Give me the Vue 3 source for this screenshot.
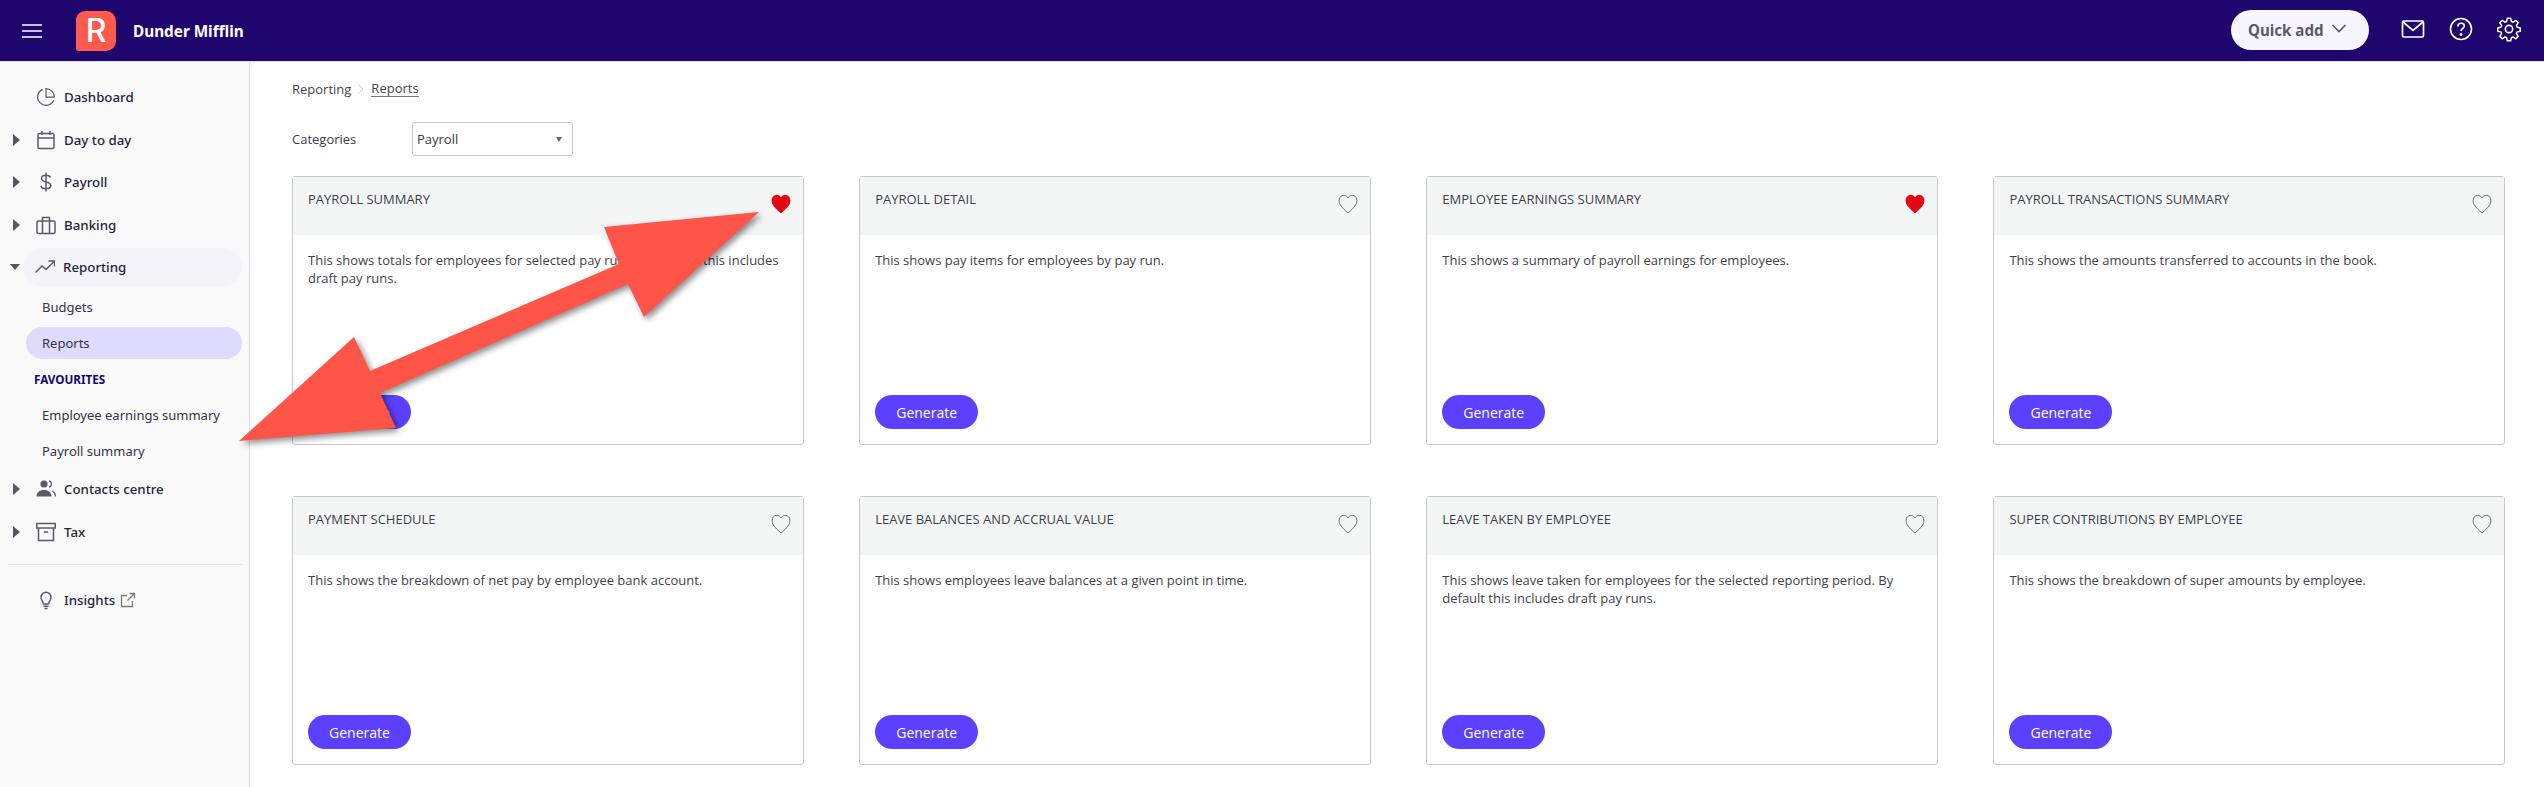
<script setup>
const reports = [
  { title: 'PAYROLL SUMMARY', text: 'This shows totals for employees for selected pay runs. By default this includes draft pay runs.', fav: true },
  { title: 'PAYROLL DETAIL', text: 'This shows pay items for employees by pay run.' },
  { title: 'EMPLOYEE EARNINGS SUMMARY', text: 'This shows a summary of payroll earnings for employees.', fav: true },
  { title: 'PAYROLL TRANSACTIONS SUMMARY', text: 'This shows the amounts transferred to accounts in the book.' },
  { title: 'PAYMENT SCHEDULE', text: 'This shows the breakdown of net pay by employee bank account.' },
  { title: 'LEAVE BALANCES AND ACCRUAL VALUE', text: 'This shows employees leave balances at a given point in time.' },
  { title: 'LEAVE TAKEN BY EMPLOYEE', text: 'This shows leave taken for employees for the selected reporting period. By default this includes draft pay runs.' },
  { title: 'SUPER CONTRIBUTIONS BY EMPLOYEE', text: 'This shows the breakdown of super amounts by employee.' },
]
const heart = 'M10 19C7.6 16.600 1 11.900 1 6.500 1 3.400 3.300 1.300 5.800 1.300c1.800 0 3.300 1 4.200 2.700 .9-1.700 2.400-2.700 4.200-2.700 2.500 0 4.800 2.100 4.800 5.200 0 5.400-6.600 10.100-9 12.500z'
</script>

<template>
  <div class="app">
    <header class="topbar">
      <svg class="burger" width="20" height="14" viewBox="0 0 20 14"><path d="M0 1h20M0 7h20M0 13h20" stroke="#fff" stroke-width="1.600"/></svg>
      <div class="logo">R</div>
      <div class="brand">Dunder Mifflin</div>
      <div class="top-right">
        <button class="quick">Quick add
          <svg class="chev" width="16" height="9" viewBox="0 0 16 9"><path d="M1.500 1l6.500 6.500L14.500 1" fill="none" stroke="#5a5a68" stroke-width="1.700"/></svg>
        </button>
        <svg class="ti mail" width="24" height="20" viewBox="0 0 24 20" fill="none" stroke="#fff" stroke-width="1.700"><rect x="1.500" y="2" width="21" height="16" rx="1.500"/><path d="M2 3l10 8.500L22 3"/></svg>
        <svg class="ti" width="24" height="24" viewBox="0 0 24 24" fill="none" stroke="#fff" stroke-width="1.600"><circle cx="12" cy="12" r="10.500"/><path d="M8.800 9.400c0-1.900 1.400-3.200 3.300-3.200s3.200 1.200 3.200 2.800c0 2.500-3.300 2.500-3.300 5"/><circle cx="12" cy="17.500" r=".6" fill="#fff"/></svg>
        <svg class="ti gear" width="26" height="26" viewBox="0 0 24 24" fill="none" stroke="#fff" stroke-width="1.500" stroke-linejoin="round"><path d="M10.300 1.500h3.400l.6 3.200 1.800.8 2.700-1.800 2.400 2.400-1.800 2.700.8 1.800 3.100.6v3.400l-3.100.6-.8 1.800 1.800 2.700-2.400 2.400-2.700-1.800-1.800.8-.6 3.100h-3.400l-.6-3.100-1.800-.8-2.700 1.800-2.400-2.400 1.800-2.700-.8-1.800-3.100-.6v-3.400l3.100-.6.800-1.800-1.800-2.700 2.400-2.400 2.700 1.800 1.800-.8z" transform="translate(12 12) scale(.92) translate(-12 -12.300)"/><circle cx="12" cy="12" r="3.400"/></svg>
      </div>
    </header>

    <div class="body">
      <aside class="sidebar">
        <div class="nav-row"><span class="caret none"></span>
          <svg class="ic" viewBox="0 0 24 24"><path d="M21.210 15.890A10 10 0 1 1 8 2.830"/><path d="M22 12A10 10 0 0 0 12 2v10z"/></svg>
          <span>Dashboard</span></div>
        <div class="nav-row"><span class="caret"></span>
          <svg class="ic" viewBox="0 0 20 20"><rect x="2" y="3.500" width="16" height="15" rx="1.500"/><path d="M2 8h16M6 1v4M14 1v4"/></svg>
          <span>Day to day</span></div>
        <div class="nav-row"><span class="caret"></span>
          <svg class="ic" viewBox="0 0 20 20"><path d="M14.500 5.500c-.5-1.500-2-2.200-4.500-2.200-2.800 0-4.500 1.200-4.500 3.200 0 4.600 9.300 2.400 9.300 7 0 2-1.800 3.200-4.800 3.200-2.800 0-4.500-1-5-2.700M10 .5v19"/></svg>
          <span>Payroll</span></div>
        <div class="nav-row"><span class="caret"></span>
          <svg class="ic" viewBox="0 0 20 20"><rect x="1" y="6" width="18" height="12.500" rx="1.500"/><path d="M6.500 6V2.500h7V6M6.500 6v12.500M13.500 6v12.500"/></svg>
          <span>Banking</span></div>
        <div class="nav-row open"><span class="caret down"></span>
          <div class="pill">
            <svg class="ic" viewBox="0 0 20 20"><path d="M.500 15.500L7 9l4 3.500L19 4.500M13.500 4H19.500v5.500"/></svg>
            <span>Reporting</span>
          </div></div>
        <div class="sub">
          <div class="sub-row">Budgets</div>
          <div class="sub-row active">Reports</div>
          <div class="fav-head">FAVOURITES</div>
          <div class="sub-row">Employee earnings summary</div>
          <div class="sub-row">Payroll summary</div>
        </div>
        <div class="nav-row"><span class="caret"></span>
          <svg class="ic filled" viewBox="0 0 20 20"><circle cx="8" cy="5" r="3.600"/><path d="M.5 17.500c0-4 3-6.500 7.500-6.500s7.500 2.500 7.500 6.500z"/><path class="thin" d="M13 1.800a3.300 3.300 0 0 1 0 6.400M16.500 12c1.800 1 2.800 3 3 5.500"/></svg>
          <span>Contacts centre</span></div>
        <div class="nav-row"><span class="caret"></span>
          <svg class="ic" viewBox="0 0 20 20"><rect x=".8" y="1.500" width="18.400" height="4.500"/><path d="M2.500 6v12.500h15V6M7.800 10h4.400"/></svg>
          <span>Tax</span></div>
        <hr class="divider" />
        <div class="nav-row insights"><span class="caret none"></span>
          <svg class="ic" viewBox="0 0 20 20"><path d="M7.500 14c0-2.300-2.500-3.300-2.500-6.800a5 5 0 0 1 10 0c0 3.500-2.500 4.500-2.500 6.800zM7.500 16.300h5M8.500 18.500h3"/></svg>
          <span>Insights</span>
          <svg class="ext" viewBox="0 0 16 16"><path d="M12.500 9v5.500h-11v-11H7M9.500 1.500h5v5M14.500 1.500L7.500 8.500"/></svg>
        </div>
      </aside>

      <main class="main">
        <div class="crumbs"><span>Reporting</span>
          <svg width="6" height="10" viewBox="0 0 6 10"><path d="M1 1l4 4-4 4" fill="none" stroke="#c9c9c9"/></svg>
          <a>Reports</a></div>
        <div class="filter">
          <label>Categories</label>
          <div class="select"><span>Payroll</span><i></i></div>
        </div>
        <section class="grid">
          <article v-for="r in reports" :key="r.title" class="card">
            <div class="card-head">
              <h3>{{ r.title }}</h3>
              <svg class="heart" width="20" height="20" viewBox="0 0 20 20">
                <path :d="heart" :fill="r.fav ? '#e30613' : 'none'" :stroke="r.fav ? '#e30613' : '#6f6f6f'" stroke-width="1"/>
              </svg>
            </div>
            <div class="card-body">
              <p>{{ r.text }}</p>
              <button class="gen">Generate</button>
            </div>
          </article>
        </section>
      </main>
    </div>

    <svg class="arrow" width="2544" height="787" viewBox="0 0 2544 787">
      <polygon points="759,212 604,227 619,264 370,371 354,337 239,441 396,428 380,393 628,284 644,317" fill="#ff5549"/>
    </svg>
  </div>
</template>

<style>
body { overflow: hidden; }
</style>
<style scoped>
.app { position: relative; width: 2544px; height: 787px; overflow: hidden; background: #fff; font-family: "Open Sans", sans-serif; color: #3b3b46; }
.topbar { height: 61px; box-sizing: content-box; border-bottom: 1px solid #e3e1ee; background: #1f066e; display: flex; align-items: center; padding-left: 22px; padding-right: 23px; }
.logo { width: 40px; height: 40px; margin-left: 34px; background: #ff5a4e; border-radius: 9px 10px 10px 3px; color: #fff; font: 500 32px/40px Inter, sans-serif; text-align: center; }
.brand { margin-left: 17px; color: #fff; font: 700 15.300px "Noto Sans", sans-serif; }
.top-right { margin-left: auto; margin-bottom: 1px; display: flex; align-items: center; }
.quick { width: 138px; height: 40px; border: 0; border-radius: 20px; background: #f7f5ff; color: #5a5a68; font: 700 15.100px "Noto Sans", sans-serif; display: flex; align-items: center; justify-content: flex-start; gap: 8px; padding: 0 0 0 17px; }
.chev { margin-bottom: 3px; }
.ti { display: block; margin-left: 24px; margin-bottom: 2px; }
.ti.mail { margin-left: 32px; }
.ti.gear { margin-left: 23px; margin-right: -1px; }
.body { display: flex; height: 725px; background: #f7f5fd; }
.sidebar { width: 249px; flex: none; box-sizing: content-box; background: #f9f9f9; border-right: 1px solid #dedce8; padding-top: 16px; font: 500 13.300px "Noto Sans", sans-serif; color: #25253a; }
.nav-row { height: 38px; margin: 0 7px 4.500px 0; display: flex; align-items: center; }
.nav-row.open { margin-bottom: 5px; }
.pill { flex: 1; height: 38px; margin-left: 3px; display: flex; align-items: center; background: #f3f3f9; border-radius: 19px; }
.pill .ic { margin-left: 12px; }
.caret { width: 0; height: 0; margin-left: 13px; border-style: solid; border-width: 6px 0 6px 7px; border-color: transparent transparent transparent #55555f; flex: none; }
.caret.none { border-color: transparent; }
.caret.down { margin-left: 10px; border-width: 6px 5.500px 0 5.500px; border-color: #55555f transparent transparent transparent; }
.ic { width: 20px; height: 20px; margin-left: 16px; margin-right: 8px; flex: none; fill: none; stroke: #5b5b68; stroke-width: 1.500; }
.ic.filled { fill: #5b5b68; stroke: none; }
.ic .thin { fill: none; stroke: #5b5b68; stroke-width: 1.200; }
.ext { width: 16px; height: 16px; margin-left: 5px; fill: none; stroke: #77777f; stroke-width: 1.300; }
.sub { display: flex; flex-direction: column; gap: 4px; margin-bottom: 3px; font-size: 13px; font-weight: 400; }
.sub-row { height: 32px; margin-left: 26px; width: 200px; padding-left: 16px; line-height: 32px; border-radius: 16px; white-space: nowrap; color: #33334a; }
.sub-row.active { background: #dfdbff; }
.fav-head { height: 32px; margin-left: 34px; line-height: 32px; font-size: 11.700px; font-weight: 700; color: #15086a; }
.divider { margin: 13px 7px 16px 8px; border: 0; border-top: 1px solid #e2e2e6; }
.main { flex: 1; padding: 17px 39px 0 42px; min-width: 0; background: #fff; border-top-left-radius: 10px; }
.crumbs { height: 20px; display: flex; align-items: center; gap: 7px; font-size: 13px; color: #444; }
.crumbs a { color: #444; border-bottom: 1px solid #77777f; line-height: 15px; }
.filter { margin-top: 23px; display: flex; align-items: center; font-size: 13px; }
.filter label { width: 120px; }
.select { width: 161px; height: 34px; box-sizing: border-box; border: 1px solid #c8c8c8; border-radius: 3px; padding: 0 10px 0 4px; display: flex; align-items: center; justify-content: space-between; }
.select i { width: 0; height: 0; border-style: solid; border-width: 5px 3.500px 0 3.500px; border-color: #666 transparent transparent transparent; }
.grid { margin-top: 20px; display: grid; grid-template-columns: repeat(4, 1fr); column-gap: 55.500px; row-gap: 51px; }
.card { height: 269px; box-sizing: border-box; border: 1px solid #c9c9c9; border-radius: 3px; display: flex; flex-direction: column; }
.card-head { height: 58px; flex: none; background: #f4f6f5; padding: 0 12px 0 15px; display: flex; justify-content: space-between; align-items: flex-start; }
.card-head h3 { margin: 13px 0 0; font-size: 13px; font-weight: 400; line-height: 18px; color: #3f3f4a; }
.heart { margin-top: 17px; }
.card-body { flex: 1; padding: 16px 15px 15px; display: flex; flex-direction: column; justify-content: space-between; align-items: flex-start; }
.card-body p { margin: 0; font-size: 13px; line-height: 18px; color: #3f3f4a; }
.gen { width: 103px; height: 34px; border: 0; border-radius: 17px; background: #5b41ff; color: #fff; font: 400 14px "Open Sans", sans-serif; padding: 0; }
.arrow { position: absolute; left: 0; top: 0; filter: drop-shadow(3px 3px 3px rgba(0,0,0,.45)); pointer-events: none; }
</style>
